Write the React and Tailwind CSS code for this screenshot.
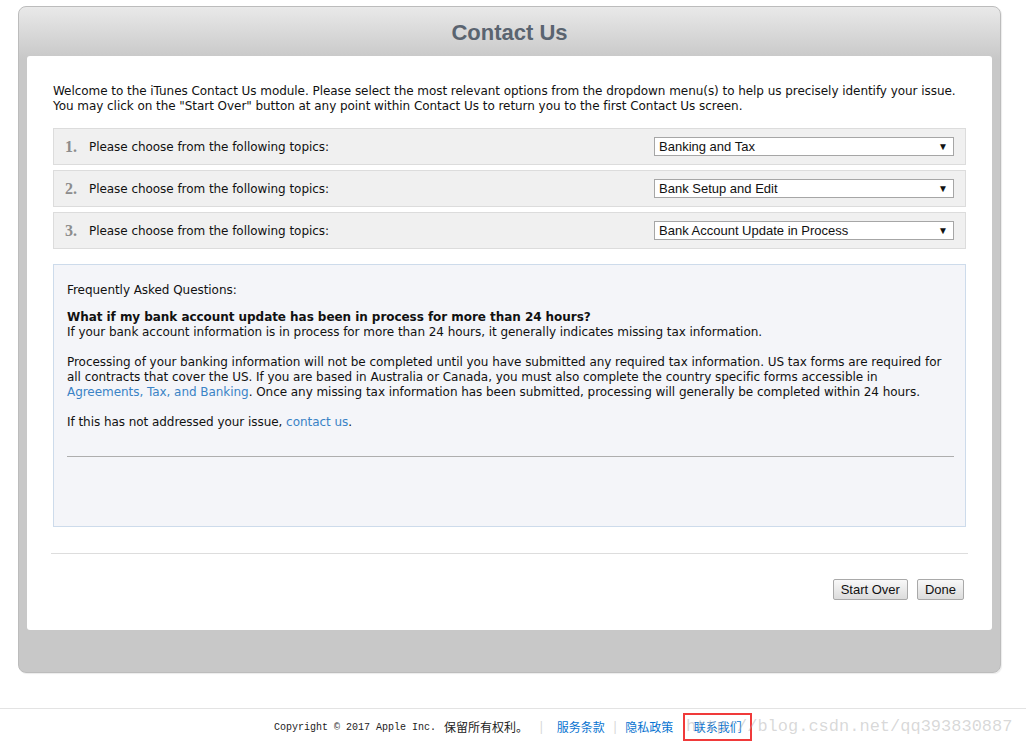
import React from "react";

const verdana = { fontFamily: '"DejaVu Sans", Verdana, sans-serif', letterSpacing: "-0.05px" };
const arial = { fontFamily: '"Liberation Sans", Arial, sans-serif' };

function TopicRow({ n, value }) {
  return (
    <div className="flex h-[37px] items-center border border-[#dcdcdc] bg-[#f0f0f0] pl-[11px] pr-[11px]">
      <span className="w-[24px] font-['Liberation_Serif',serif] text-[16px] font-bold text-[#8c8c8c]">{n}.</span>
      <span className="flex-1 text-[12px] text-[#111]" style={verdana}>
        Please choose from the following topics:
      </span>
      <div
        className="flex h-[19px] w-[300px] items-center justify-between border border-[#a6a6a6] bg-white pl-[4px] pr-[5px] text-[13px] text-[#111]"
        style={arial}
      >
        <span>{value}</span>
        <span className="text-[10px] leading-none">▼</span>
      </div>
    </div>
  );
}

function Btn({ children }) {
  return (
    <button
      className="h-[21px] rounded-[2px] border border-[#a9a9a9] bg-[linear-gradient(to_bottom,#f8f8f8,#dcdcdc)] px-[7px] text-[13px] leading-none text-[#111]"
      style={arial}
    >
      {children}
    </button>
  );
}

export default function App() {
  return (
    <div className="relative min-h-[746px] bg-white">
      <div className="ml-[18px] w-[983px] pt-[6px]">
        <div className="rounded-[8px] border border-[#bcbcbc] bg-[linear-gradient(to_bottom,#e9e9e9,#c8c8c8_52px,#c8c8c8)] shadow-[1px_1px_1px_rgba(0,0,0,0.08)]">
          <div className="flex h-[49px] items-center justify-center pt-[2px]">
            <h1 className="text-[22px] font-bold text-[#5a6470]" style={arial}>
              Contact Us
            </h1>
          </div>
          <div className="mx-[8px] mb-[42px] rounded-[3px] bg-white px-[26px] pb-[30px] pt-[28px]">
            <p className="text-[12px] leading-[15px] text-[#111]" style={verdana}>
              Welcome to the iTunes Contact Us module. Please select the most relevant options from the dropdown menu(s) to help us precisely identify your issue.
              <br />
              You may click on the "Start Over" button at any point within Contact Us to return you to the first Contact Us screen.
            </p>

            <div className="mt-[14px] flex flex-col gap-[5px]">
              <TopicRow n={1} value="Banking and Tax" />
              <TopicRow n={2} value="Bank Setup and Edit" />
              <TopicRow n={3} value="Bank Account Update in Process" />
            </div>

            <div
              className="mt-[15px] h-[263px] border border-[#cddbeb] bg-[#f4f5f9] pl-[13px] pr-[11px] pt-[18px] text-[12px] leading-[15px] text-[#111]"
              style={verdana}
            >
              <p>Frequently Asked Questions:</p>
              <p className="mt-[12px] font-bold">What if my bank account update has been in process for more than 24 hours?</p>
              <p>If your bank account information is in process for more than 24 hours, it generally indicates missing tax information.</p>
              <p className="mt-[15px]">
                Processing of your banking information will not be completed until you have submitted any required tax information. US tax forms are required for all contracts that cover the US. If you are based in Australia or Canada, you must also complete the country specific forms accessible in{" "}
                <a className="text-[#3a83c6]">Agreements, Tax, and Banking</a>. Once any missing tax information has been submitted, processing will generally be completed within 24 hours.
              </p>
              <p className="mt-[15px]">
                If this has not addressed your issue, <a className="text-[#3a83c6]">contact us</a>.
              </p>
              <div className="mt-[26px] border-t border-[#aeaeae]" />
            </div>

            <div className="-mx-[2px] mt-[26px] border-t border-[#dddddd]" />

            <div className="mt-[25px] flex justify-end gap-[9px] pr-[2px]">
              <Btn>Start Over</Btn>
              <Btn>Done</Btn>
            </div>
          </div>
        </div>
      </div>

      <footer className="relative mt-[35px] h-[37px] border-t border-[#e3e3e3]">
        <div className="flex h-full items-center pl-[274px] text-[12px]">
          <span className="font-['Liberation_Mono',monospace] text-[10px] text-[#222]">Copyright © 2017 Apple Inc.</span>
          <span className="ml-[8px] font-['Noto_Sans_CJK_SC',sans-serif] text-[12px] text-[#222]">保留所有权利。</span>
          <span className="ml-[10px] text-[#d4d4d4]">|</span>
          <span className="ml-[12px] font-['Noto_Sans_CJK_SC',sans-serif] text-[#0a74d1]">服务条款</span>
          <span className="ml-[7px] text-[#d4d4d4]">|</span>
          <span className="ml-[7px] font-['Noto_Sans_CJK_SC',sans-serif] text-[#0a74d1]">隐私政策</span>
          <span className="ml-[10px] flex h-[28px] w-[69px] items-center justify-center border-2 border-[#f03a3a] font-['Noto_Sans_CJK_SC',sans-serif] text-[#0a74d1]">
            联系我们
          </span>
        </div>
        <div className="pointer-events-none absolute left-[686px] top-[4px] font-['Liberation_Mono',monospace] text-[17px] leading-[28px] text-[rgba(170,170,170,0.45)]">
          http://blog.csdn.net/qq393830887
        </div>
      </footer>
    </div>
  );
}
